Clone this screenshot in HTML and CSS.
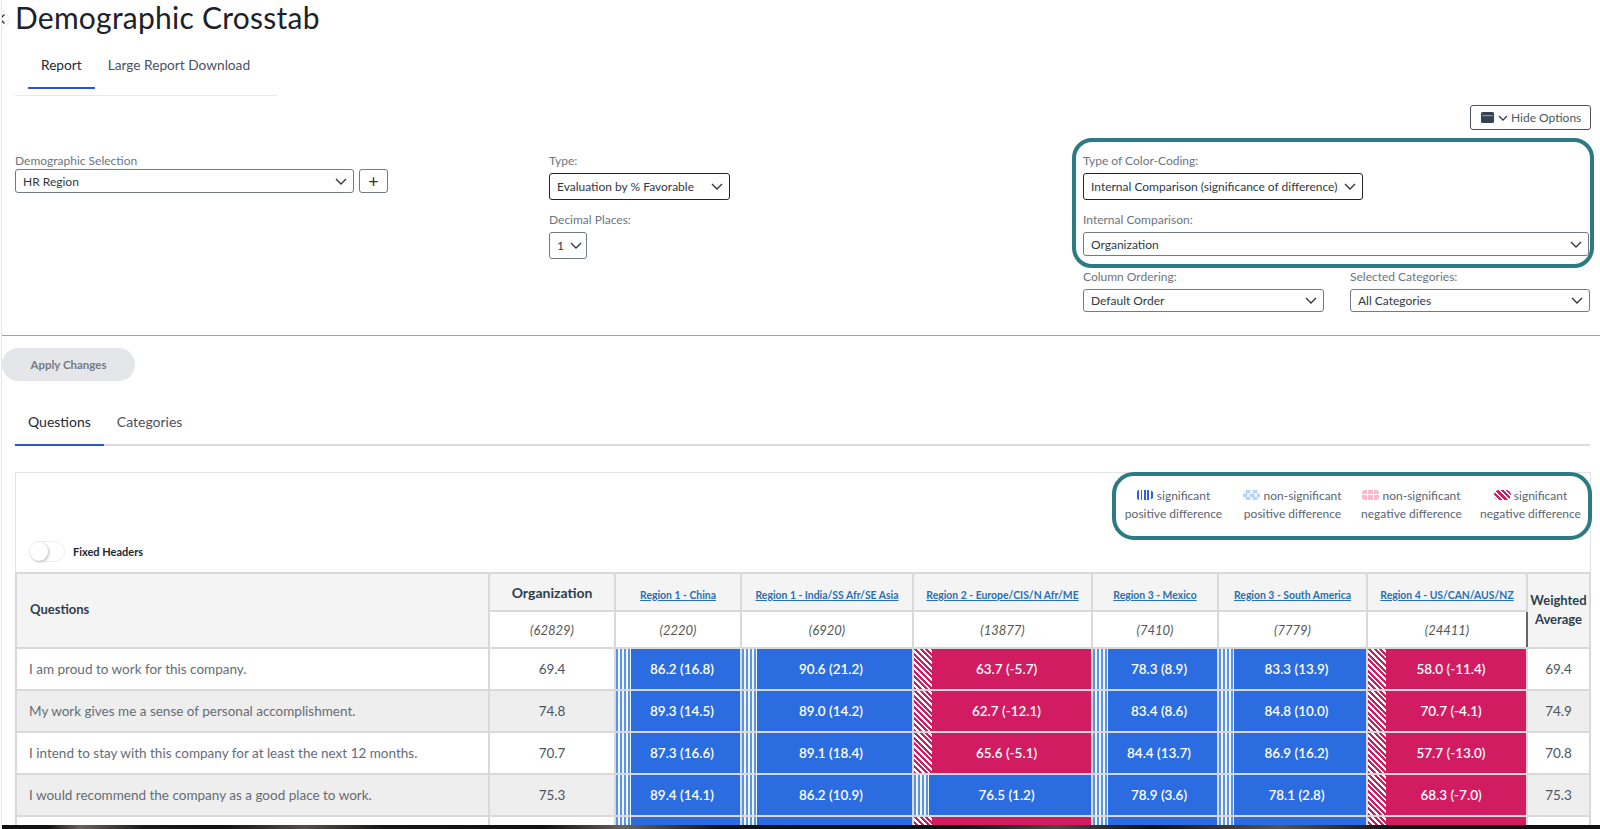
FILE: index.html
```html
<!DOCTYPE html>
<html lang="en">
<head>
<meta charset="utf-8">
<title>Demographic Crosstab</title>
<link rel="stylesheet" href="styles.css">
</head>
<body>
<div class="page">
  <button class="back" aria-label="Back"><svg width="8" height="12" viewBox="0 0 8 12"><path d="M6.5 1.5 2 6l4.5 4.5" fill="none" stroke="#333" stroke-width="1.4"/></svg></button>
  <h1>Demographic Crosstab</h1>
  <nav class="tabs top-tabs">
    <a class="tab active">Report</a>
    <a class="tab">Large Report Download</a>
  </nav>
  <div class="options-bar">
    <button class="hide-btn">
      <svg width="13" height="11" viewBox="0 0 13 11"><rect x="0" y="0" width="13" height="11" rx="1.5" fill="#36424f"/><rect x="1.2" y="3" width="10.6" height="1.2" fill="#8d97a3"/></svg>
      <svg class="mini-chev" width="10" height="6" viewBox="0 0 10 6"><path d="M1 1l4 4 4-4" fill="none" stroke="#36424f" stroke-width="1.3"/></svg>
      <span>Hide Options</span>
    </button>
  </div>
  <section class="options">
    <div class="opt-col">
      <div class="label tight">Demographic Selection</div>
      <div class="demo-row">
        <div class="select h24 demo-select"><span>HR Region</span><svg class="chev" width="12" height="7" viewBox="0 0 12 7"><path d="M1 1l5 5 5-5" fill="none" stroke="#333" stroke-width="1.3"/></svg></div>
        <button class="plus">+</button>
      </div>
    </div>
    <div class="opt-col">
      <div class="label">Type:</div>
      <div class="select dark h27 type-select"><span>Evaluation by % Favorable</span><svg class="chev" width="12" height="7" viewBox="0 0 12 7"><path d="M1 1l5 5 5-5" fill="none" stroke="#333" stroke-width="1.3"/></svg></div>
      <div class="label next">Decimal Places:</div>
      <div class="select h27 dec-select"><span>1</span><svg class="chev" width="12" height="7" viewBox="0 0 12 7"><path d="M1 1l5 5 5-5" fill="none" stroke="#333" stroke-width="1.3"/></svg></div>
    </div>
    <div class="opt-col">
      <div class="highlight coding-box">
        <div class="label">Type of Color-Coding:</div>
        <div class="select dark h27 coding-select"><span>Internal Comparison (significance of difference)</span><svg class="chev" width="12" height="7" viewBox="0 0 12 7"><path d="M1 1l5 5 5-5" fill="none" stroke="#333" stroke-width="1.3"/></svg></div>
        <div class="label next">Internal Comparison:</div>
        <div class="select h24"><span>Organization</span><svg class="chev" width="12" height="7" viewBox="0 0 12 7"><path d="M1 1l5 5 5-5" fill="none" stroke="#333" stroke-width="1.3"/></svg></div>
      </div>
      <div class="order-row">
        <div class="order-col">
          <div class="label">Column Ordering:</div>
          <div class="select h23"><span>Default Order</span><svg class="chev" width="12" height="7" viewBox="0 0 12 7"><path d="M1 1l5 5 5-5" fill="none" stroke="#333" stroke-width="1.3"/></svg></div>
        </div>
        <div class="order-col">
          <div class="label">Selected Categories:</div>
          <div class="select h23"><span>All Categories</span><svg class="chev" width="12" height="7" viewBox="0 0 12 7"><path d="M1 1l5 5 5-5" fill="none" stroke="#333" stroke-width="1.3"/></svg></div>
        </div>
      </div>
    </div>
  </section>
  <hr class="divider">
  <button class="apply">Apply Changes</button>
  <nav class="tabs sub-tabs">
    <a class="tab active">Questions</a>
    <a class="tab">Categories</a>
  </nav>
  <section class="card">
    <div class="highlight legend">
      <div class="legend-grid">
        <div class="legend-item"><i class="swatch sw-pos"></i>significant<br>positive difference</div>
        <div class="legend-item"><i class="swatch sw-pos-ns"></i>non-significant<br>positive difference</div>
        <div class="legend-item"><i class="swatch sw-neg-ns"></i>non-significant<br>negative difference</div>
        <div class="legend-item"><i class="swatch sw-neg"></i>significant<br>negative difference</div>
      </div>
    </div>
    <div class="toggle-row">
      <span class="toggle"><span class="knob"></span></span>
      <span class="toggle-label">Fixed Headers</span>
    </div>
    <table class="crosstab">
      <colgroup>
        <col class="c-q"><col class="c-126"><col class="c-126"><col class="c-172"><col class="c-179"><col class="c-126"><col class="c-149"><col class="c-160"><col class="c-63">
      </colgroup>
      <thead>
        <tr class="h1row">
          <th rowspan="2" class="th-q">Questions</th>
          <th class="th-org">Organization</th>
          <th><a class="region">Region 1 - China</a></th>
          <th><a class="region">Region 1 - India/SS Afr/SE Asia</a></th>
          <th><a class="region">Region 2 - Europe/CIS/N Afr/ME</a></th>
          <th><a class="region">Region 3 - Mexico</a></th>
          <th><a class="region">Region 3 - South America</a></th>
          <th><a class="region">Region 4 - US/CAN/AUS/NZ</a></th>
          <th rowspan="2" class="th-w">Weighted Average</th>
        </tr>
        <tr class="h2row">
          <td class="n">(62829)</td><td class="n">(2220)</td><td class="n">(6920)</td><td class="n">(13877)</td><td class="n">(7410)</td><td class="n">(7779)</td><td class="n">(24411)</td>
        </tr>
      </thead>
      <tbody>
        <tr class="r42">
          <td class="q">I am proud to work for this company.</td><td class="v">69.4</td>
          <td class="pos">86.2 (16.8)</td><td class="pos">90.6 (21.2)</td><td class="neg">63.7 (-5.7)</td><td class="pos">78.3 (8.9)</td><td class="pos">83.3 (13.9)</td><td class="neg">58.0 (-11.4)</td><td class="v">69.4</td>
        </tr>
        <tr class="r42 alt">
          <td class="q">My work gives me a sense of personal accomplishment.</td><td class="v">74.8</td>
          <td class="pos">89.3 (14.5)</td><td class="pos">89.0 (14.2)</td><td class="neg">62.7 (-12.1)</td><td class="pos">83.4 (8.6)</td><td class="pos">84.8 (10.0)</td><td class="neg">70.7 (-4.1)</td><td class="v">74.9</td>
        </tr>
        <tr class="r42">
          <td class="q">I intend to stay with this company for at least the next 12 months.</td><td class="v">70.7</td>
          <td class="pos">87.3 (16.6)</td><td class="pos">89.1 (18.4)</td><td class="neg">65.6 (-5.1)</td><td class="pos">84.4 (13.7)</td><td class="pos">86.9 (16.2)</td><td class="neg">57.7 (-13.0)</td><td class="v">70.8</td>
        </tr>
        <tr class="r42 alt">
          <td class="q">I would recommend the company as a good place to work.</td><td class="v">75.3</td>
          <td class="pos">89.4 (14.1)</td><td class="pos">86.2 (10.9)</td><td class="pos">76.5 (1.2)</td><td class="pos">78.9 (3.6)</td><td class="pos">78.1 (2.8)</td><td class="neg">68.3 (-7.0)</td><td class="v">75.3</td>
        </tr>
        <tr class="r42">
          <td class="q"></td><td class="v"></td>
          <td class="pos"></td><td class="pos"></td><td class="neg"></td><td class="pos"></td><td class="pos"></td><td class="neg"></td><td class="v"></td>
        </tr>
      </tbody>
    </table>
  </section>
  <div class="bottom-edge"></div>
</div>
</body>
</html>
```
FILE: styles.css
```css
* { box-sizing: border-box; }
html, body { margin: 0; padding: 0; height: 829px; overflow: hidden; background: #fff; }
body { font-family: Lato, "Noto Sans", sans-serif; color: #2f3b47; }

.page { position: relative; height: 829px; margin-left: 1px; border-left: 1px solid #e6e6e6; overflow: hidden; }

.back { position: absolute; left: -13px; top: 9px; width: 20px; height: 20px; padding: 0 0 0 8px; border: 1px solid #eee; border-radius: 50%; background: #fff; display: flex; align-items: center; justify-content: flex-start; }

h1 { margin: 0 0 0 13px; font-size: 30px; line-height: 35px; font-weight: 400; color: #1d2228; letter-spacing: .25px; }

.tabs { display: flex; }
.tab { display: block; font-size: 14px; line-height: 18px; padding: 0 13px 13px; color: #4a5160; border-bottom: 2px solid transparent; margin-bottom: -2px; }
.tab.active { color: #222a35; border-bottom-color: #2b55c9; }

.top-tabs { margin: 21px 0 0 13px; width: 262px; padding-left: 13px; padding-bottom: 6px; border-bottom: 1px solid #e8e8e8; }
.top-tabs .tab { font-size: 13.7px; padding-bottom: 13px; margin-bottom: 0; }

.options-bar { display: flex; justify-content: flex-end; margin-top: 9px; padding-right: 9px; }
.hide-btn { display: flex; align-items: center; height: 25px; width: 121px; padding: 0 0 0 10px; background: #fff; border: 1px solid #48535f; border-radius: 3px; font: 12px Lato, sans-serif; color: #4b5663; }
.mini-chev { margin: 0 3px 0 4px; }

.options { display: grid; grid-template-columns: 534px 523px 522px; margin: 8px 0 0 13px; }
.opt-col { padding-top: 15px; }
.opt-col:last-child { padding-top: 0; }

.label { font-size: 12px; line-height: 15px; margin-bottom: 5px; color: #6d7580; white-space: nowrap; }
.label.tight { margin-bottom: 1px; }
.label.next { margin-top: 12px; }

.select { display: flex; align-items: center; justify-content: space-between; padding: 0 6px 0 7px; background: #fff; border: 1px solid #737a82; border-radius: 3px; font-size: 12px; color: #2f3944; white-space: nowrap; }
.select.dark { border-color: #20262c; }
.h23 { height: 23px; }
.h24 { height: 24px; }
.h27 { height: 27px; }
.chev { flex: none; }

.demo-row { display: flex; gap: 5px; }
.demo-select { width: 339px; }
.plus { width: 29px; height: 24px; padding: 0; border: 1px solid #737a82; border-radius: 3px; background: #fff; font: 400 18px/20px Lato, sans-serif; color: #333; }
.type-select { width: 181px; }
.dec-select { width: 38px; padding: 0 4px 0 7px; }

.highlight { border: 4px solid #2b7a84; background: #fff; }
.coding-box { height: 130px; border-radius: 20px; padding: 11px 1px 0 7px; }
.coding-select { width: 280px; }
.order-row { display: flex; gap: 26px; padding-left: 11px; margin-top: 1px; }
.order-col { width: 241px; }
.order-col + .order-col { width: 240px; }

.divider { margin: 23px 0 0; border: 0; border-top: 1px solid #a2a2a2; }

.apply { display: block; margin-top: 12px; width: 133px; height: 33px; border: 0; border-radius: 17px; background: #e5e6e9; font: 700 11.5px Lato, sans-serif; color: #757a84; }

.sub-tabs { margin: 32px 0 0 13px; width: 1575px; padding-bottom: 0; border-bottom: 2px solid #dcdcdc; }

.card { margin: 26px 0 0 13px; width: 1576px; height: 400px; border: 1px solid #e3e3e3; }

.legend { width: 480px; height: 68px; margin: -1px -2px 0 auto; border-radius: 22px; padding-top: 11px; }
.legend-grid { display: grid; grid-template-columns: repeat(4, 119px); margin: 0 -2px; }
.legend-item { text-align: center; font-size: 12px; line-height: 18px; color: #5a6470; white-space: nowrap; }
.swatch { display: inline-block; width: 17px; height: 10px; margin-right: 3px; border-radius: 4px; vertical-align: 0; }
.sw-pos { background: repeating-linear-gradient(90deg, #2a62e6 0 2px, #fff 2px 3.5px); border-radius: 2px 5px 5px 2px; }
.sw-pos-ns { background: repeating-conic-gradient(#b6d2fa 0 25%, #eaf2fe 0 50%) 0 0 / 7px 7px; }
.sw-neg-ns { background: linear-gradient(90deg, transparent 5px, #fff 5px 6px, transparent 6px 11px, #fff 11px 12px, transparent 12px), linear-gradient(#fbb6d0 0 4px, #fff 4px 5px, #fbb6d0 5px); border-radius: 3px; }
.sw-neg { background: repeating-linear-gradient(45deg, #d21c62 0 2.4px, #fff 2.4px 3.8px); border-radius: 5px; }

.toggle-row { display: flex; align-items: center; gap: 8px; padding-left: 13px; margin-top: 1px; height: 21px; }
.toggle { display: block; position: relative; width: 36px; height: 21px; border: 1px solid #eee; border-radius: 11px; background: #fff; }
.knob { position: absolute; left: 0; top: 0; width: 18px; height: 19px; border-radius: 50%; background: #fff; box-shadow: 1px 1px 3px #bbb; }
.toggle-label { font-size: 11px; font-weight: 700; color: #22282f; }

.crosstab { border-collapse: collapse; table-layout: fixed; width: 1574px; margin: 10px 0 0 -1px; }
.c-q { width: 473px; }
.c-126 { width: 126px; }
.c-172 { width: 172px; }
.c-179 { width: 179px; }
.c-149 { width: 149px; }
.c-160 { width: 160px; }
.c-63 { width: 63px; }

.crosstab th, .crosstab td { border: 2px solid #d9d9d9; padding: 0; text-align: center; }
.crosstab th { background: #f4f4f4; }
.h1row { height: 38px; }
.h2row { height: 37px; }
.r42 { height: 42px; }
.alt { background: #eee; }

.crosstab .th-q { text-align: left; padding: 0 0 4px 13px; font-size: 13px; font-weight: 700; color: #2d3e50; }
.th-org { font-size: 14px; font-weight: 700; color: #2d3e50; }
.crosstab .th-w { border-left-color: #666; font-size: 13px; font-weight: 700; line-height: 19px; color: #2d3e50; padding-bottom: 2px; }
.region { font-size: 10.4px; font-weight: 700; color: #2a6fb5; text-decoration: underline; white-space: nowrap; }
.n { font-size: 13px; font-style: italic; color: #555; }

.crosstab .q { text-align: left; padding-left: 12px; font-size: 13.5px; color: #666c75; white-space: nowrap; }
.v { font-size: 13.5px; color: #4d5560; }

.pos, .neg { color: #fff; font-size: 13.5px; font-weight: 600; background-repeat: no-repeat; }
.crosstab .pos { padding-left: 8px; background-color: #2b6de0; background-image: repeating-linear-gradient(90deg, #5c93ea 0 2px, #f2f6fd 2px 4px); background-size: 15px 100%; }
.crosstab .neg { padding-left: 8px; background-color: #d21c62; background-image: repeating-linear-gradient(45deg, #d21c62 0 2px, #fff 2px 4px); background-size: 18px 100%; }

.bottom-edge { position: absolute; left: -2px; right: 0; bottom: 0; height: 4px; background: linear-gradient(90deg, #111 0 3%, #6b625a 5%, #1a1a1a 9%, #111 14%, #56504a 19%, #151515 24%, #111 34%, #6a6259 39%, #141414 45%, #111 60%, #4d4843 66%, #111 72%, #5b544d 80%, #111 87%, #111 100%); }
```
